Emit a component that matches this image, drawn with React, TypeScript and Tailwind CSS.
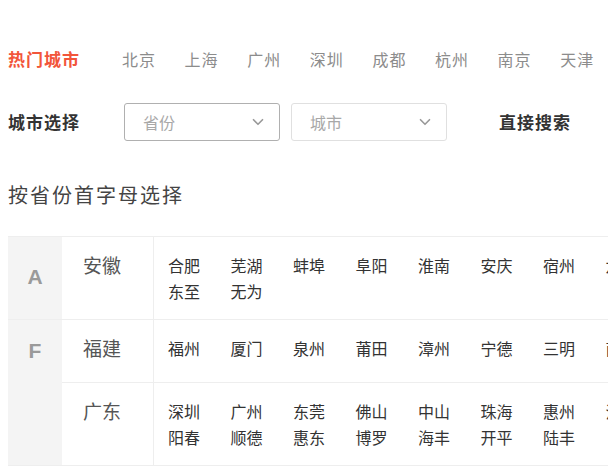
import { ChevronDown } from "lucide-react";

const hotCities = ["北京", "上海", "广州", "深圳", "成都", "杭州", "南京", "天津", "武汉"];

const groups = [
  {
    letter: "A",
    pad: "pt-[29px]",
    provinces: [
      {
        name: "安徽",
        cities: ["合肥", "芜湖", "蚌埠", "阜阳", "淮南", "安庆", "宿州", "六安", "东至", "无为"],
      },
    ],
  },
  {
    letter: "F",
    pad: "pt-[20px]",
    provinces: [
      {
        name: "福建",
        cities: ["福州", "厦门", "泉州", "莆田", "漳州", "宁德", "三明", "南平"],
      },
      {
        name: "广东",
        cities: [
          "深圳", "广州", "东莞", "佛山", "中山", "珠海", "惠州", "江门",
          "阳春", "顺德", "惠东", "博罗", "海丰", "开平", "陆丰",
        ],
      },
    ],
  },
];

const cjk = "font-['Noto_Sans_CJK_SC',sans-serif]";

function Select({ label, active }: { label: string; active?: boolean }) {
  return (
    <div
      className={`flex items-center justify-between w-[156px] h-[38px] pl-[18px] pr-[12px] rounded-[3px] border bg-white ${
        active ? "border-[#b0b0b0]" : "border-[#e0e0e0]"
      }`}
    >
      <span className="text-[16px] text-[#a8a8a8]">{label}</span>
      <ChevronDown className="w-[18px] h-[18px] text-[#999]" strokeWidth={2.2} />
    </div>
  );
}

export default function App() {
  return (
    <div className={`w-full h-[470px] overflow-hidden bg-white ${cjk}`}>
      <div className="w-[1000px] pl-2 pt-[46px]">
        {/* Hot cities */}
        <div className="flex items-center h-[26px]">
          <span className="w-[114px] text-[17px] font-bold text-[#f2553a] tracking-[1px]">热门城市</span>
          <div className="flex">
            {hotCities.map((c) => (
              <span key={c} className="w-[62.6px] text-[16px] text-[#8c8c8c] tracking-[1px]">
                {c}
              </span>
            ))}
          </div>
        </div>

        {/* Select row */}
        <div className="flex items-center mt-[31px]">
          <span className="w-[116px] text-[17px] font-bold text-[#333] tracking-[1px]">城市选择</span>
          <div className="flex gap-[11px]">
            <Select label="省份" active />
            <Select label="城市" />
          </div>
          <span className="ml-[52px] text-[17px] font-bold text-[#333] tracking-[1px]">直接搜索</span>
        </div>

        {/* Heading */}
        <h2 className="mt-[40px] text-[20px] text-[#444] tracking-[2px] leading-[28px]">按省份首字母选择</h2>

        {/* Table */}
        <div className="mt-[27px] border-t border-[#eee]">
          {groups.map((g) => (
            <div key={g.letter} className="flex border-b border-[#eee]">
              <div className={`w-[54px] shrink-0 bg-[#f4f4f4] flex justify-center ${g.pad}`}>
                <span className="font-['Liberation_Sans',sans-serif] font-bold text-[21px] text-[#9a9a9a] leading-none">
                  {g.letter}
                </span>
              </div>
              <div className="flex-1">
                {g.provinces.map((p, i) => (
                  <div key={p.name} className={`flex min-h-[62px] ${i > 0 ? "border-t border-[#eee]" : ""}`}>
                    <div className="w-[92px] shrink-0 border-r border-[#eee] pl-[21px] pt-[14px] text-[19px] text-[#555] leading-[28px]">
                      {p.name}
                    </div>
                    <div className="flex flex-wrap content-start w-[515px] pl-[14px] pt-[15px] pb-[15px]">
                      {p.cities.map((c) => (
                        <span key={c} className="w-[62.5px] text-[16px] text-[#333] leading-[26px]">
                          {c}
                        </span>
                      ))}
                    </div>
                  </div>
                ))}
              </div>
            </div>
          ))}
        </div>
      </div>
    </div>
  );
}
